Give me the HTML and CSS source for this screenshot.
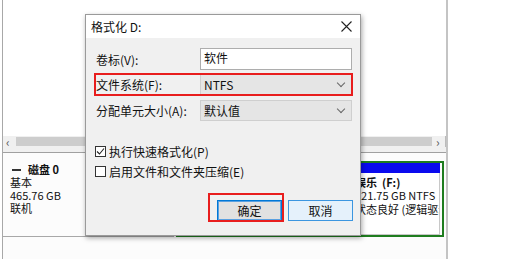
FILE: index.html
```html
<!DOCTYPE html>
<html lang="zh-CN">
<head>
  <meta charset="UTF-8">
  <meta name="viewport" content="width=device-width, initial-scale=1.0">
  <title>磁盘管理 - 格式化 D:</title>
  <link rel="stylesheet" href="styles.css">
</head>
<body>
  <div class="mgmt">
    <div class="volumes"></div>
    <div class="hscroll">
      <span class="arrow">&lsaquo;</span>
      <div class="thumb"></div>
      <span class="arrow">&rsaquo;</span>
    </div>
    <div class="splitter"></div>
    <div class="graph">
      <div class="disk-row">
        <div class="disk-info">
          <div class="disk-name"><span class="disk-icon"></span>磁盘 0</div>
          <div>基本</div>
          <div>465.76 GB</div>
          <div>联机</div>
        </div>
        <div class="parts">
          <div class="part primary">
            <div class="part-bar"></div>
            <div class="part-body"></div>
          </div>
          <div class="extended">
            <div class="part logical">
              <div class="part-bar"></div>
              <div class="part-body"></div>
            </div>
            <div class="part logical">
              <div class="part-bar"></div>
              <div class="part-body">
                <div class="part-name">娱乐&nbsp; (F:)</div>
                <div>121.75 GB NTFS</div>
                <div>状态良好 (逻辑驱动器)</div>
              </div>
            </div>
          </div>
        </div>
      </div>
    </div>
  </div>

  <div class="dialog">
    <div class="titlebar">
      <span>格式化 D:</span>
      <svg class="close" width="11" height="11" viewBox="0 0 11 11">
        <path d="M0.5 0.5 L10.5 10.5 M10.5 0.5 L0.5 10.5" stroke="#222" stroke-width="1.1" fill="none"/>
      </svg>
    </div>
    <div class="dialog-body">
      <div class="fields">
        <label class="field-label">卷标(V):</label>
        <div class="textbox">软件</div>

        <div class="marked-row">
          <label class="field-label">文件系统(F):</label>
          <div class="combo">NTFS<span class="chev"></span></div>
          <div class="mark"></div>
        </div>

        <label class="field-label">分配单元大小(A):</label>
        <div class="combo">默认值<span class="chev"></span></div>
      </div>

      <div class="checks">
        <div class="check-row">
          <span class="checkbox checked">
            <svg width="9" height="9" viewBox="0 0 9 9"><path d="M1 4.5 L3.5 7 L8 1.5" stroke="#222" stroke-width="1.1" fill="none"/></svg>
          </span>
          执行快速格式化(P)
        </div>
        <div class="check-row">
          <span class="checkbox"></span>
          启用文件和文件夹压缩(E)
        </div>
      </div>

      <div class="buttons">
        <div class="btn-wrap">
          <button class="btn default">确定</button>
          <div class="mark btn-mark"></div>
        </div>
        <button class="btn hover">取消</button>
      </div>
    </div>
  </div>
</body>
</html>
```

FILE: styles.css
```css
body {
  margin: 0;
  background: #fff;
  font-family: "Noto Sans CJK SC", "Noto Sans", sans-serif;
  font-size: 12px;
  color: #111;
  width: 520px;
  height: 259px;
  overflow: hidden;
  position: relative;
}

/* disk management window behind the dialog */
.mgmt {
  margin-left: 2px;
  width: 443px;
  height: 259px;
  border-left: 1px solid #a8a8a8;
  border-right: 2px solid #c4c4c4;
  display: flex;
  flex-direction: column;
}
.volumes {
  height: 136px;
  flex-shrink: 0;
  background: #fff;
}
.hscroll {
  height: 11px;
  flex-shrink: 0;
  background: #f0f0f0;
  display: flex;
  align-items: center;
  gap: 4px;
  padding: 0 3px;
  border-right: 1px solid #bbb;
}
.hscroll .arrow {
  font-size: 12px;
  line-height: 11px;
  color: #555;
  width: 6px;
}
.hscroll .thumb {
  flex: 1;
  height: 9px;
  background: #cdcdcd;
}
.splitter {
  height: 5px;
  flex-shrink: 0;
  background: #f0f0f0;
  border-bottom: 1px solid #a0a0a0;
}
.graph {
  flex: 1;
  background: #fcfcfc;
}
.disk-row {
  display: flex;
  height: 84px;
}
.disk-info {
  width: 78px;
  flex-shrink: 0;
  padding: 10px 0 0 7px;
  border-right: 1px solid #a8a8a8;
  border-bottom: 1px solid #a8a8a8;
  font-size: 11px;
  line-height: 13px;
  white-space: nowrap;
}
.disk-name {
  font-weight: bold;
  display: flex;
  align-items: center;
}
.disk-icon {
  width: 9px;
  height: 2px;
  background: #333;
  margin: 0 7px 0 2px;
}
.parts {
  flex: 1;
  min-width: 0;
  display: flex;
  gap: 2px;
  padding: 8px 2px 0 0;
}
.part {
  display: flex;
  flex-direction: column;
}
.part-bar {
  height: 10px;
  background: #0a0aee;
}
.part-body {
  flex: 1;
  background: #fff;
  border: 1px solid #c8c8c8;
  border-top: none;
  padding: 3px 3px 0 3px;
  font-size: 11px;
  line-height: 13.3px;
  white-space: nowrap;
  overflow: hidden;
}
.part-name {
  font-weight: bold;
}
.primary {
  width: 85px;
  flex-shrink: 0;
  border-bottom: 1px solid #a8a8a8;
}
.extended {
  flex: 1;
  min-width: 0;
  display: flex;
  gap: 2px;
  border: 2px solid #1f7d1f;
  padding: 0 2px 0 0;
}
.extended .logical:first-child {
  width: 171px;
  flex-shrink: 0;
}
.extended .logical:last-child {
  flex: 1;
  min-width: 0;
}

/* format dialog, lying over the window */
.dialog {
  position: absolute;
  left: 85px;
  top: 14px;
  width: 274px;
  height: 220px;
  border: 1px solid #9a9a9a;
  background: #f0f0f0;
  box-shadow: 1px 2px 5px rgba(0,0,0,0.35);
  display: flex;
  flex-direction: column;
}
.titlebar {
  height: 23px;
  background: #fff;
  display: flex;
  align-items: center;
  justify-content: space-between;
  padding: 0 8px 0 5px;
}
.dialog-body {
  flex: 1;
  padding: 10px 7px 0 9px;
}
.fields {
  display: grid;
  grid-template-columns: 105px 152px;
  grid-template-rows: 22px 21px 19px;
  row-gap: 5px;
  align-items: center;
}
.marked-row {
  grid-column: 1 / 3;
  display: grid;
  grid-template-columns: 105px 152px;
  align-items: center;
  height: 21px;
  position: relative;
  margin-bottom: 2px;
}
.field-label {
  padding-left: 1px;
}
.textbox {
  height: 20px;
  border: 1px solid #adadad;
  background: #fff;
  padding: 0 3px;
  line-height: 18px;
}
.combo {
  height: 19px;
  border: 1px solid #cfcfcf;
  background: #e5e5e5;
  padding: 0 3px;
  line-height: 19px;
  display: flex;
  justify-content: space-between;
  align-items: center;
}
.chev {
  width: 5px;
  height: 5px;
  border-right: 1px solid #666;
  border-bottom: 1px solid #666;
  transform: rotate(45deg);
  margin: 0 4px 4px 0;
}
.mark {
  position: absolute;
  border: 2px solid #e81d1d;
  left: -1px;
  right: -1px;
  top: -1px;
  bottom: -1px;
}
.checks {
  margin-top: 21px;
}
.check-row {
  height: 20px;
  display: flex;
  align-items: center;
  gap: 3px;
}
.checkbox {
  width: 9px;
  height: 9px;
  border: 1px solid #333;
  background: #fff;
  display: flex;
  align-items: center;
  justify-content: center;
}
.buttons {
  margin-top: 19px;
  display: flex;
  justify-content: flex-end;
  gap: 6px;
}
.btn-wrap {
  position: relative;
}
.btn {
  width: 65px;
  height: 21px;
  font-family: inherit;
  font-size: 12px;
  color: #111;
  padding: 0;
}
.btn.default {
  background: #e1e1e1;
  border: 1px solid #0078d7;
  box-shadow: inset 0 0 0 1px #5aa0e0;
}
.btn.hover {
  background: #e5f1fb;
  border: 1px solid #3c96e0;
}
.btn-mark {
  left: -9px;
  right: -2px;
  top: -7px;
  bottom: -1px;
}
```
